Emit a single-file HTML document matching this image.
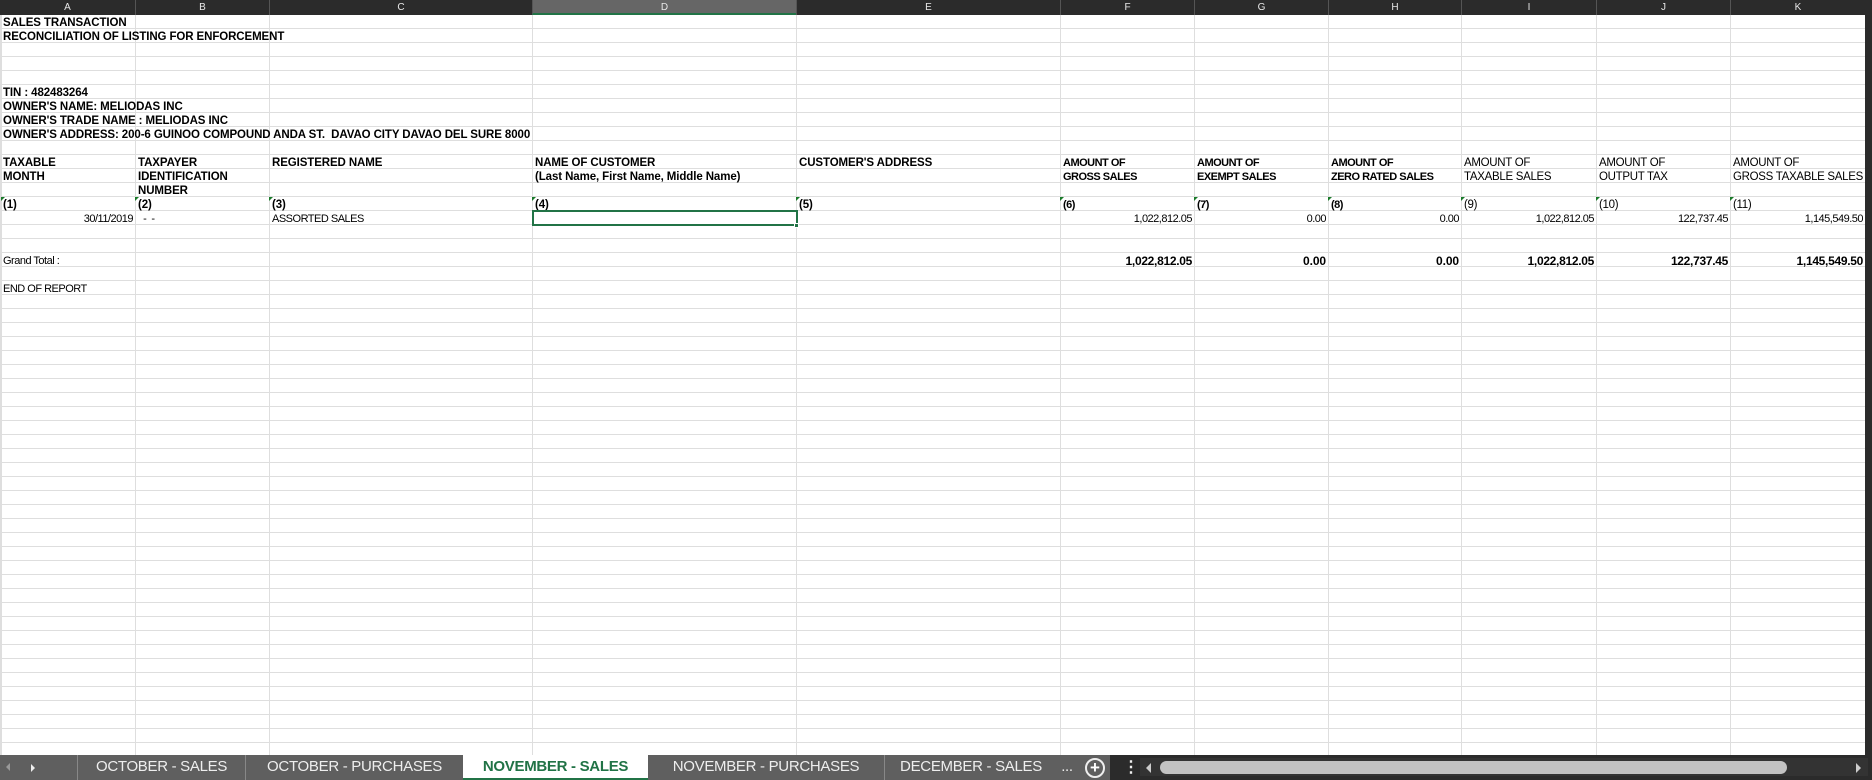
<!DOCTYPE html>
<html><head><meta charset="utf-8"><style>
*{margin:0;padding:0;box-sizing:border-box}
body{width:1872px;height:780px;overflow:hidden;background:#fff;position:relative;font-family:"Liberation Sans",sans-serif;color:#000}
#grid{position:absolute;left:0;top:15px;width:1865px;height:740px;background:repeating-linear-gradient(to bottom,transparent 0,transparent 13px,#dedede 13px,#dedede 14px)}
.v{position:absolute;top:15px;height:740px;width:1px;background:#dedede}
#hdr{position:absolute;left:0;top:0;width:1872px;height:15px;background:#2b2b2b}
.h{position:absolute;top:0;height:15px;color:#e8e8e8;font-size:10px;line-height:15px;text-align:center;border-left:1px solid #555}
.c{position:absolute;height:14px;line-height:16px;font-size:11px;white-space:nowrap;padding-left:3px}
.b{font-weight:bold;font-size:11.5px;letter-spacing:-0.1px}
.n{font-size:11.5px;letter-spacing:-0.3px}
.r{text-align:right;padding-right:2px;padding-left:0}
.s{letter-spacing:-0.5px}
.bs{font-size:11px;letter-spacing:-0.5px}
.t{position:absolute;width:0;height:0;border-top:4px solid #1a7a2a;border-right:4px solid transparent}
#tabs{position:absolute;left:0;top:755px;width:1872px;height:25px;background:#5f5f5f}
.tab{position:absolute;top:0;height:25px;line-height:24px;color:#eee;font-size:15px;text-align:center;border-left:1px solid #888;letter-spacing:-0.3px}
</style></head><body>
<div id="grid"></div>
<div class="v" style="left:135px"></div><div class="v" style="left:269px"></div><div class="v" style="left:532px"></div><div class="v" style="left:796px"></div><div class="v" style="left:1060px"></div><div class="v" style="left:1194px"></div><div class="v" style="left:1328px"></div><div class="v" style="left:1461px"></div><div class="v" style="left:1596px"></div><div class="v" style="left:1730px"></div>
<div style="position:absolute;left:0;top:15px;width:2px;height:740px;background:#dedede"></div>
<div style="position:absolute;left:1865px;top:15px;width:7px;height:740px;background:#2b2b2b"></div>
<div id="hdr">
<div class="h" style="left:0;width:135px;border:none">A</div>
<div class="h" style="left:135px;width:134px">B</div>
<div class="h" style="left:269px;width:263px">C</div>
<div class="h" style="left:532px;width:264px;background:#666;border-bottom:2px solid #217346">D</div>
<div class="h" style="left:796px;width:264px">E</div>
<div class="h" style="left:1060px;width:134px">F</div>
<div class="h" style="left:1194px;width:134px">G</div>
<div class="h" style="left:1328px;width:133px">H</div>
<div class="h" style="left:1461px;width:135px">I</div>
<div class="h" style="left:1596px;width:134px">J</div>
<div class="h" style="left:1730px;width:135px">K</div>
</div>

<div class="c b" style="left:0;top:15px">SALES TRANSACTION</div>
<div class="c b" style="left:0;top:29px">RECONCILIATION OF LISTING FOR ENFORCEMENT</div>
<div class="c b" style="left:0;top:85px">TIN : 482483264</div>
<div class="c b" style="left:0;top:99px">OWNER'S NAME: MELIODAS INC</div>
<div class="c b" style="left:0;top:113px">OWNER'S TRADE NAME : MELIODAS INC</div>
<div class="c b" style="left:0;top:127px">OWNER'S ADDRESS: 200-6 GUINOO COMPOUND ANDA ST.&nbsp; DAVAO CITY DAVAO DEL SURE 8000</div>

<div class="c b" style="left:0;top:155px">TAXABLE</div>
<div class="c b" style="left:0;top:169px">MONTH</div>
<div class="c b" style="left:135px;top:155px">TAXPAYER</div>
<div class="c b" style="left:135px;top:169px">IDENTIFICATION</div>
<div class="c b" style="left:135px;top:183px">NUMBER</div>
<div class="c b" style="left:269px;top:155px">REGISTERED NAME</div>
<div class="c b" style="left:532px;top:155px">NAME OF CUSTOMER</div>
<div class="c b" style="left:532px;top:169px">(Last Name, First Name, Middle Name)</div>
<div class="c b" style="left:796px;top:155px">CUSTOMER'S ADDRESS</div>
<div class="c b bs" style="left:1060px;top:155px">AMOUNT OF</div>
<div class="c b bs" style="left:1060px;top:169px">GROSS SALES</div>
<div class="c b bs" style="left:1194px;top:155px">AMOUNT OF</div>
<div class="c b bs" style="left:1194px;top:169px">EXEMPT SALES</div>
<div class="c b bs" style="left:1328px;top:155px">AMOUNT OF</div>
<div class="c b bs" style="left:1328px;top:169px">ZERO RATED SALES</div>
<div class="c n" style="left:1461px;top:155px">AMOUNT OF</div>
<div class="c n" style="left:1461px;top:169px">TAXABLE SALES</div>
<div class="c n" style="left:1596px;top:155px">AMOUNT OF</div>
<div class="c n" style="left:1596px;top:169px">OUTPUT TAX</div>
<div class="c n" style="left:1730px;top:155px;width:135px;overflow:hidden">AMOUNT OF</div>
<div class="c n" style="left:1730px;top:169px;width:135px;overflow:hidden">GROSS TAXABLE SALES</div>

<div class="c b" style="left:0;top:197px">(1)</div>
<div class="c b" style="left:135px;top:197px">(2)</div>
<div class="c b" style="left:269px;top:197px">(3)</div>
<div class="c b" style="left:532px;top:197px">(4)</div>
<div class="c b" style="left:796px;top:197px">(5)</div>
<div class="c b bs" style="left:1060px;top:197px">(6)</div>
<div class="c b bs" style="left:1194px;top:197px">(7)</div>
<div class="c b bs" style="left:1328px;top:197px">(8)</div>
<div class="c n" style="left:1461px;top:197px">(9)</div>
<div class="c n" style="left:1596px;top:197px">(10)</div>
<div class="c n" style="left:1730px;top:197px">(11)</div>
<div class="t" style="left:1px;top:197px"></div><div class="t" style="left:135px;top:197px"></div><div class="t" style="left:269px;top:197px"></div><div class="t" style="left:532px;top:197px"></div><div class="t" style="left:796px;top:197px"></div><div class="t" style="left:1060px;top:197px"></div><div class="t" style="left:1194px;top:197px"></div><div class="t" style="left:1328px;top:197px"></div><div class="t" style="left:1461px;top:197px"></div><div class="t" style="left:1596px;top:197px"></div><div class="t" style="left:1730px;top:197px"></div>

<div class="c r s" style="left:0;top:211px;width:135px">30/11/2019</div>
<div class="c s" style="left:135px;top:211px">&nbsp; -&nbsp; -</div>
<div class="c s" style="left:269px;top:211px">ASSORTED SALES</div>
<div class="c r s" style="left:1060px;top:211px;width:134px">1,022,812.05</div>
<div class="c r s" style="left:1194px;top:211px;width:134px">0.00</div>
<div class="c r s" style="left:1328px;top:211px;width:133px">0.00</div>
<div class="c r s" style="left:1461px;top:211px;width:135px">1,022,812.05</div>
<div class="c r s" style="left:1596px;top:211px;width:134px">122,737.45</div>
<div class="c r s" style="left:1730px;top:211px;width:135px">1,145,549.50</div>
<div style="position:absolute;left:532px;top:210px;width:266px;height:16px;border:2px solid #217346"></div>
<div style="position:absolute;left:794px;top:223px;width:5px;height:5px;background:#217346;border:1px solid #fff"></div>

<div class="c s" style="left:0;top:253px">Grand Total :</div>
<div class="c r b" style="left:1060px;top:253px;width:134px;font-size:12px;letter-spacing:-0.3px">1,022,812.05</div>
<div class="c r b" style="left:1194px;top:253px;width:134px;font-size:12px">0.00</div>
<div class="c r b" style="left:1328px;top:253px;width:133px;font-size:12px">0.00</div>
<div class="c r b" style="left:1461px;top:253px;width:135px;font-size:12px;letter-spacing:-0.3px">1,022,812.05</div>
<div class="c r b" style="left:1596px;top:253px;width:134px;font-size:12px;letter-spacing:-0.3px">122,737.45</div>
<div class="c r b" style="left:1730px;top:253px;width:135px;font-size:12px;letter-spacing:-0.3px">1,145,549.50</div>
<div class="c s" style="left:0;top:281px">END OF REPORT</div>

<div id="tabs">
<div style="position:absolute;left:6px;top:8px;width:0;height:0;border-right:4px solid #999;border-top:4px solid transparent;border-bottom:4px solid transparent"></div>
<div style="position:absolute;left:31px;top:9px;width:0;height:0;border-left:4px solid #eee;border-top:4px solid transparent;border-bottom:4px solid transparent"></div>
<div class="tab" style="left:77px;width:168px">OCTOBER - SALES</div>
<div class="tab" style="left:245px;width:218px">OCTOBER - PURCHASES</div>
<div class="tab" style="left:463px;width:185px;background:#fff;color:#217346;font-weight:bold;border-bottom:2px solid #217346;border-left:none">NOVEMBER - SALES</div>
<div class="tab" style="left:648px;width:236px;border-left:none">NOVEMBER - PURCHASES</div>
<div class="tab" style="left:884px;width:173px">DECEMBER - SALES</div>
<div class="tab" style="left:1057px;width:20px;border:none">...</div>
<div style="position:absolute;left:1085px;top:3px;width:20px;height:20px;border:2px solid #eee;border-radius:50%;color:#fff;font-size:17px;line-height:15px;text-align:center;font-weight:bold">+</div>
<div style="position:absolute;left:1110px;top:0;width:762px;height:25px;background:#2b2b2b"></div>
<div style="position:absolute;left:1123px;top:5px;color:#eee;font-size:16px;line-height:16px;font-weight:bold">⋮</div>
<div style="position:absolute;left:1140px;top:3px;width:728px;height:18px;background:#333"></div>
<div style="position:absolute;left:1146px;top:8px;border-right:5px solid #ccc;border-top:5px solid transparent;border-bottom:5px solid transparent"></div>
<div style="position:absolute;left:1160px;top:6px;width:627px;height:13px;background:#c2c2c2;border-radius:7px"></div>
<div style="position:absolute;left:1856px;top:8px;border-left:5px solid #ccc;border-top:5px solid transparent;border-bottom:5px solid transparent"></div>
</div>
</body></html>
